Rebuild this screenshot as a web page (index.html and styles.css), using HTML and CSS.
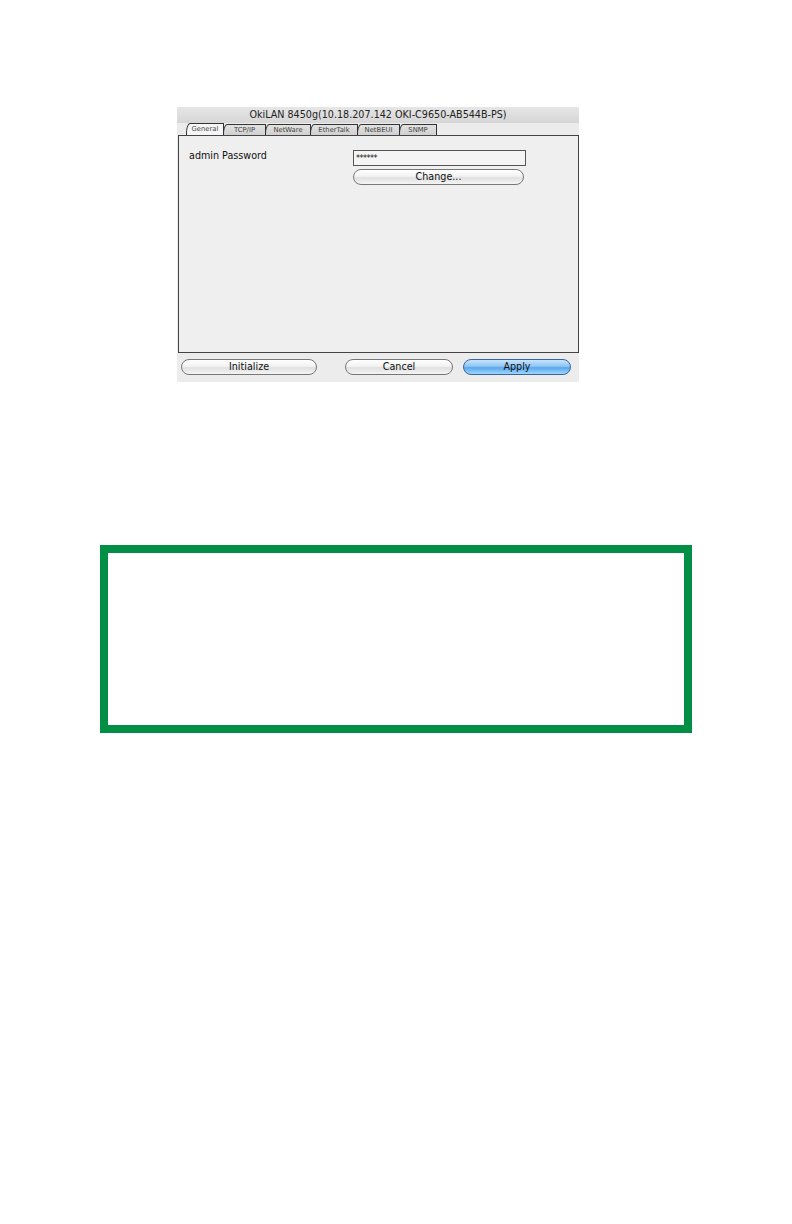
FILE: index.html
```html
<!DOCTYPE html>
<html>
<head>
<meta charset="utf-8">
<link rel="stylesheet" href="styles.css">
</head>
<body>
<div class="page">
  <div class="dialog">
    <div class="titlebar">OkiLAN 8450g(10.18.207.142 OKI-C9650-AB544B-PS)</div>
    <div class="tabs">
      <div class="tab active w1">General</div>
      <div class="tab w2">TCP/IP</div>
      <div class="tab w3">NetWare</div>
      <div class="tab w4">EtherTalk</div>
      <div class="tab w5">NetBEUI</div>
      <div class="tab w6">SNMP</div>
    </div>
    <div class="panel">
      <div class="row">
        <div class="label">admin Password</div>
        <div class="controls">
          <div class="field">******</div>
          <div class="btn change">Change...</div>
        </div>
      </div>
    </div>
    <div class="buttons">
      <div class="btn init">Initialize</div>
      <div class="btn cancel">Cancel</div>
      <div class="btn apply">Apply</div>
    </div>
  </div>
  <div class="notebox"></div>
</div>
</body>
</html>
```
FILE: styles.css
```css
html, body {
  margin: 0;
  padding: 0;
  background: #ffffff;
}
body {
  font-family: "DejaVu Sans", Verdana, sans-serif;
  color: #111;
}
.page {
  width: 792px;
  height: 1224px;
  overflow: hidden;
}
.dialog {
  margin-left: 177px;
  margin-top: 107px;
  width: 402px;
  background: #ececec;
  padding-bottom: 7px;
}
.titlebar {
  height: 16px;
  line-height: 16px;
  text-align: center;
  font-size: 9.6px;
  color: #222;
  background: linear-gradient(#e6e6e6, #d6d6d6);
  border-top-left-radius: 3px;
  border-top-right-radius: 3px;
}
.tabs {
  display: flex;
  height: 12px;
  padding-left: 9px;
  align-items: flex-end;
  background: #ececec;
}
.tab {
  height: 10px;
  line-height: 10px;
  font-size: 6.8px;
  color: #444;
  text-align: center;
  background: linear-gradient(#e2e2e2, #d0d0d0);
  border: 1px solid #333;
  border-bottom: none;
  border-top-left-radius: 4px 10px;
  margin-right: -1px;
}
.tab.active {
  background: #f6f6f6;
  height: 11px;
  line-height: 11px;
}
.w1 { width: 36px; }
.w2 { width: 41px; }
.w3 { width: 44px; }
.w4 { width: 46px; }
.w5 { width: 41px; }
.w6 { width: 36px; }
.panel {
  margin-left: 1px;
  height: 216px;
  border: 1px solid #444;
  background: #efefef;
}
.row {
  display: flex;
  padding-top: 14px;
  padding-left: 10px;
}
.label {
  width: 164px;
  font-size: 9.6px;
  line-height: 12px;
}
.controls {
  display: flex;
  flex-direction: column;
  gap: 3px;
}
.field {
  width: 169px;
  height: 14px;
  border: 1px solid #555;
  background: #f4f4f4;
  font-size: 8px;
  line-height: 15px;
  padding-left: 2px;
  letter-spacing: -0.5px;
}
.btn {
  height: 14px;
  line-height: 14px;
  font-size: 9.6px;
  text-align: center;
  border: 1px solid #777;
  border-radius: 8px;
  background: linear-gradient(#ffffff 0%, #f2f2f2 45%, #e0e0e0 55%, #f4f4f4 100%);
  color: #111;
}
.change {
  width: 169px;
}
.buttons {
  display: flex;
  padding-top: 6px;
  padding-left: 4px;
}
.init { width: 134px; }
.cancel { width: 106px; margin-left: 28px; }
.apply {
  width: 106px;
  margin-left: 10px;
  border-color: #3a64a0;
  background: linear-gradient(#c8e4fb 0%, #8ec6f4 45%, #5aa7ee 55%, #9fd6fb 100%);
}
.notebox {
  margin-left: 100px;
  margin-top: 163px;
  width: 592px;
  height: 188px;
  box-sizing: border-box;
  border: 8px solid #008f45;
  background: #ffffff;
}
```
